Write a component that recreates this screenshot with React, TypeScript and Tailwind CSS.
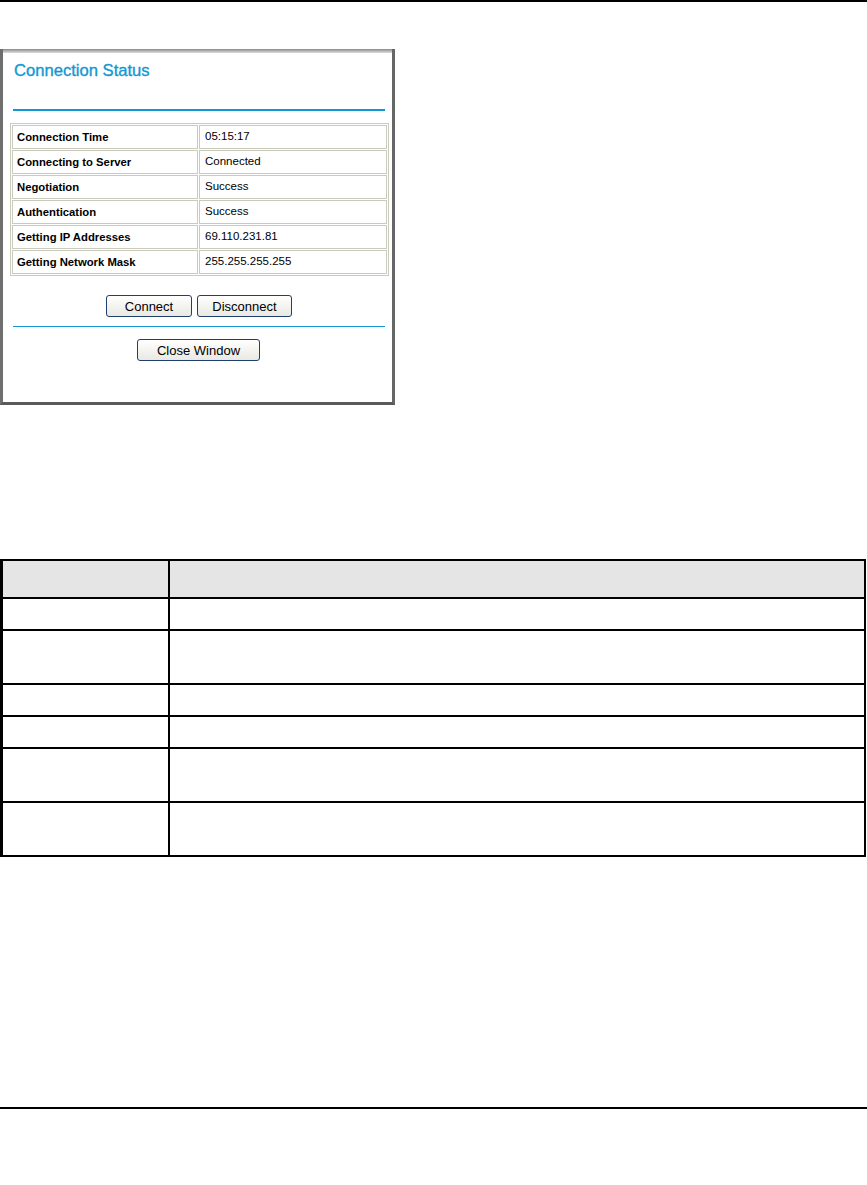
import React from 'react';

const font = { fontFamily: '"Liberation Sans", Arial, sans-serif' };

const statusRows: [string, string][] = [
  ['Connection Time', '05:15:17'],
  ['Connecting to Server', 'Connected'],
  ['Negotiation', 'Success'],
  ['Authentication', 'Success'],
  ['Getting IP Addresses', '69.110.231.81'],
  ['Getting Network Mask', '255.255.255.255'],
];

// row heights of the blank description table (border included)
const blankRows = [32, 54, 32, 32, 54, 54];

const XpButton: React.FC<{ label: string; width: string }> = ({ label, width }) => (
  <button
    className={`${width} h-[22px] rounded-[3px] border border-[#1f3f70] bg-linear-to-b from-[#ffffff] to-[#e9e8e2] text-[13px] leading-none text-black`}
    style={font}
  >
    {label}
  </button>
);

const ConnectionStatusWindow: React.FC = () => (
  <div className="mt-[47px] w-[395px] h-[356px] flex flex-col bg-white border-l-[3px] border-r-[3px] border-b-[3px] border-l-[#6e6e6e] border-r-[#666666] border-b-[#5a5a5a]">
    <div className="h-[4px] bg-linear-to-b from-[#8a8a8a] to-[#dedede]" />

    <div
      className="pl-[11px] pt-[8px] text-[16.6px] leading-[19px] text-[#1198d2] [-webkit-text-stroke:0.35px_#1198d2]"
      style={font}
    >
      Connection Status
    </div>

    <div className="ml-[10px] mt-[29px] w-[372px] h-[2px] bg-[#1198d2]" />

    <table
      className="ml-[7px] mt-[12px] w-[379px] border-separate border-spacing-[1px] border border-[#cbcbbd]"
      style={font}
    >
      <tbody>
        {statusRows.map(([label, value]) => (
          <tr key={label}>
            <td className="w-[186px] h-[24px] py-0 pl-[4px] border border-[#cbcbbd] text-[11.3px] font-bold text-black">
              {label}
            </td>
            <td className="w-[188px] h-[24px] py-0 pl-[5px] border border-[#cbcbbd] text-[11.5px] text-black">
              {value}
            </td>
          </tr>
        ))}
      </tbody>
    </table>

    <div className="mt-[19px] flex justify-center gap-[5px] pl-[3px]">
      <XpButton label="Connect" width="w-[86px]" />
      <XpButton label="Disconnect" width="w-[95px]" />
    </div>

    <div className="ml-[10px] mt-[9px] w-[372px] h-[1px] bg-[#1198d2]" />

    <div className="mt-[12px] flex justify-center pl-[2px]">
      <XpButton label="Close Window" width="w-[123px]" />
    </div>
  </div>
);

export default function App() {
  return (
    <div className="w-[867px] h-[1185px] bg-white overflow-hidden" style={font}>
      <div className="h-[2px] bg-black" />

      <ConnectionStatusWindow />

      <div className="mt-[154px] w-[866px] border-t-2 border-l-[3px] border-r-2 border-black">
        <div className="h-[38px] flex border-b-2 border-black bg-[#e5e5e5]">
          <div className="w-[167px] border-r-2 border-black" />
          <div className="flex-1" />
        </div>
        {blankRows.map((h, i) => (
          <div
            key={i}
            className={`flex border-b-2 border-black ${h === 54 ? 'h-[54px]' : 'h-[32px]'}`}
          >
            <div className="w-[167px] border-r-2 border-black" />
            <div className="flex-1" />
          </div>
        ))}
      </div>

      <div className="mt-[250px] h-[2px] bg-black" />
    </div>
  );
}
